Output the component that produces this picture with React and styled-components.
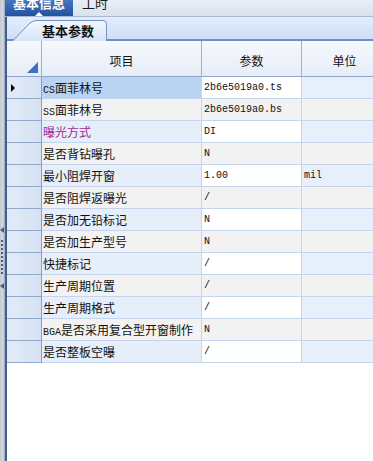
import React from "react";
import styled, { createGlobalStyle } from "styled-components";

const Global = createGlobalStyle`
  html, body { margin: 0; padding: 0; background: #fff; }
  body { width: 373px; height: 461px; overflow: hidden; font-family: "Noto Sans CJK SC", "Liberation Sans", sans-serif; }
`;

const Page = styled.div`
  display: flex;
  width: 373px;
  height: 461px;
  overflow: hidden;
`;

const Splitter = styled.div`
  position: relative;
  flex: none;
  width: 5px;
  background: linear-gradient(to right, #c2c8d0, #d6dae0 55%, #9aa6b8);
`;

const SplitArrow = styled.div`
  position: absolute;
  left: 0;
  top: ${(p) => p.$top}px;
  width: 0;
  height: 0;
  border-top: 3px solid transparent;
  border-bottom: 3px solid transparent;
  border-right: 4px solid #4b5b7a;
`;

const SplitDots = styled.div`
  position: absolute;
  left: 1px;
  top: 240px;
  width: 2px;
  height: 36px;
  background: repeating-linear-gradient(to bottom, #4b5b7a 0 2px, transparent 2px 4px);
`;

const Main = styled.div`
  flex: 1;
  display: flex;
  flex-direction: column;
  min-width: 0;
`;

const TopBar = styled.div`
  flex: none;
  height: 16px;
  display: flex;
  align-items: flex-start;
  gap: 9px;
  overflow: hidden;
  background: linear-gradient(#e8eef7, #d8e2ef);
  border-bottom: 1px solid #a9b9d2;
`;

const TopTab = styled.div`
  position: relative;
  flex: none;
  height: 16px;
  display: flex;
  justify-content: center;
  background: ${(p) => (p.$active ? "linear-gradient(#4676bf, #2251a0)" : "transparent")};
  color: ${(p) => (p.$active ? "#fff" : "#1a1a1a")};
  font-size: 13px;
  font-weight: ${(p) => (p.$active ? 700 : 400)};
  line-height: 14px;
  width: ${(p) => (p.$active ? "68px" : "auto")};
  span { margin-top: -4px; }
`;

const TabPointer = styled.div`
  position: absolute;
  left: 30px;
  bottom: 0;
  width: 0;
  height: 0;
  border-left: 4px solid transparent;
  border-right: 4px solid transparent;
  border-bottom: 4px solid #fff;
`;

const Body = styled.div`
  flex: 1;
  display: flex;
  flex-direction: column;
  border-left: 2px solid #3f5f92;
  min-height: 0;
`;

const SubTabBar = styled.div`
  flex: none;
  height: 22px;
  display: flex;
  align-items: flex-end;
  padding-left: 5px;
  background: linear-gradient(#e4edfb, #cfdef5);
  border-bottom: 2px solid #6d8ec8;
`;

const SubTab = styled.div`
  position: relative;
  width: 95px;
  height: 20px;
  display: flex;
  align-items: center;
  padding-left: 30px;
  box-sizing: border-box;
  font-size: 13px;
  font-weight: 700;
  color: #111;
  margin-bottom: -1px;
  span { position: relative; }
  svg { position: absolute; left: 0; top: 0; }
`;

const Grid = styled.div`
  display: grid;
  grid-template-columns: 35px 160px 100px 86px;
  grid-template-rows: 36px;
  grid-auto-rows: 22px;
  width: 381px;
`;

const HeadCell = styled.div`
  position: relative;
  box-sizing: border-box;
  display: flex;
  align-items: center;
  justify-content: center;
  padding-top: 4px;
  font-size: 12px;
  color: #111;
  background: linear-gradient(#f6f9fd, #e6edf8);
  border-right: 1px solid #9fb1cd;
  border-bottom: 1px solid #8fa6c9;
`;

const Corner = styled.div`
  position: absolute;
  right: 3px;
  bottom: 3px;
  width: 0;
  height: 0;
  border-left: 11px solid transparent;
  border-bottom: 11px solid #3d6fc2;
`;

const RowHead = styled.div`
  position: relative;
  box-sizing: border-box;
  background: linear-gradient(to right, #e2ebf8, #d6e2f4);
  border-right: 1px solid #8c9fbc;
  border-bottom: 1px solid #93a9c9;
`;

const RowPointer = styled.div`
  position: absolute;
  left: 4px;
  top: 7px;
  width: 0;
  height: 0;
  border-top: 4px solid transparent;
  border-bottom: 4px solid transparent;
  border-left: 4px solid #000;
`;

const Cell = styled.div`
  box-sizing: border-box;
  padding-left: 1px;
  font-size: 12px;
  line-height: 21px;
  white-space: nowrap;
  overflow: hidden;
  color: ${(p) => p.$color || "#111"};
  background: ${(p) => p.$bg};
  border-right: 1px solid #c5d5ed;
  border-bottom: 1px solid #c5d5ed;
`;

const Latin = styled.span`
  font-family: "Liberation Mono", monospace;
  font-size: 10px;
`;

const Value = styled(Cell)`
  font-family: "Liberation Mono", monospace;
  font-size: 10px;
  padding-left: 2px;
`;

const rows = [
  { item: [["l", "CS"], ["c", "面菲林号"]], value: "2b6e5019a0.ts" },
  { item: [["l", "SS"], ["c", "面菲林号"]], value: "2b6e5019a0.bs" },
  { item: [["c", "曝光方式"]], value: "DI", color: "#a6278c" },
  { item: [["c", "是否背钻曝孔"]], value: "N" },
  { item: [["c", "最小阻焊开窗"]], value: "1.00", unit: "mil" },
  { item: [["c", "是否阻焊返曝光"]], value: "/" },
  { item: [["c", "是否加无铅标记"]], value: "N" },
  { item: [["c", "是否加生产型号"]], value: "N" },
  { item: [["c", "快捷标记"]], value: "/" },
  { item: [["c", "生产周期位置"]], value: "/" },
  { item: [["c", "生产周期格式"]], value: "/" },
  { item: [["l", "BGA"], ["c", "是否采用复合型开窗制作"]], value: "N" },
  { item: [["c", "是否整板空曝"]], value: "/" },
];

export default function App() {
  return (
    <Page>
      <Global />
      <Splitter>
        <SplitArrow $top={227} />
        <SplitDots />
        <SplitArrow $top={283} />
      </Splitter>
      <Main>
        <TopBar>
          <TopTab $active>
            <span>基本信息</span>
            <TabPointer />
          </TopTab>
          <TopTab>
            <span>工时</span>
          </TopTab>
        </TopBar>
        <Body>
          <SubTabBar>
            <SubTab>
              <svg width="95" height="21" viewBox="0 0 95 21">
                <defs>
                  <linearGradient id="tabg" x1="0" y1="0" x2="0" y2="1">
                    <stop offset="0" stopColor="#f3f7fe" />
                    <stop offset="1" stopColor="#d6e3f7" />
                  </linearGradient>
                </defs>
                <path
                  d="M0.5,21 L18,3 Q21,0.5 25,0.5 L91,0.5 Q94.5,0.5 94.5,4 L94.5,21"
                  fill="url(#tabg)"
                  stroke="#7592c2"
                  strokeWidth="1"
                />
              </svg>
              <span>基本参数</span>
            </SubTab>
          </SubTabBar>
          <Grid>
            <HeadCell>
              <Corner />
            </HeadCell>
            <HeadCell>项目</HeadCell>
            <HeadCell>参数</HeadCell>
            <HeadCell>单位</HeadCell>
            {rows.map((r, i) => {
              const odd = i % 2 === 0;
              const itemBg = i === 0 ? "#b9d3f3" : odd ? "#e6eefa" : "#f2f2f2";
              const valBg = odd ? "#ffffff" : "#f2f2f2";
              const unitBg = odd ? "#e7effb" : "#f2f2f2";
              return (
                <React.Fragment key={i}>
                  <RowHead>{i === 0 && <RowPointer />}</RowHead>
                  <Cell $bg={itemBg} $color={r.color}>
                    {r.item.map(([k, t], j) =>
                      k === "l" ? <Latin key={j}>{t}</Latin> : <span key={j}>{t}</span>
                    )}
                  </Cell>
                  <Value $bg={valBg}>{r.value}</Value>
                  <Value $bg={unitBg}>{r.unit || ""}</Value>
                </React.Fragment>
              );
            })}
          </Grid>
        </Body>
      </Main>
    </Page>
  );
}
